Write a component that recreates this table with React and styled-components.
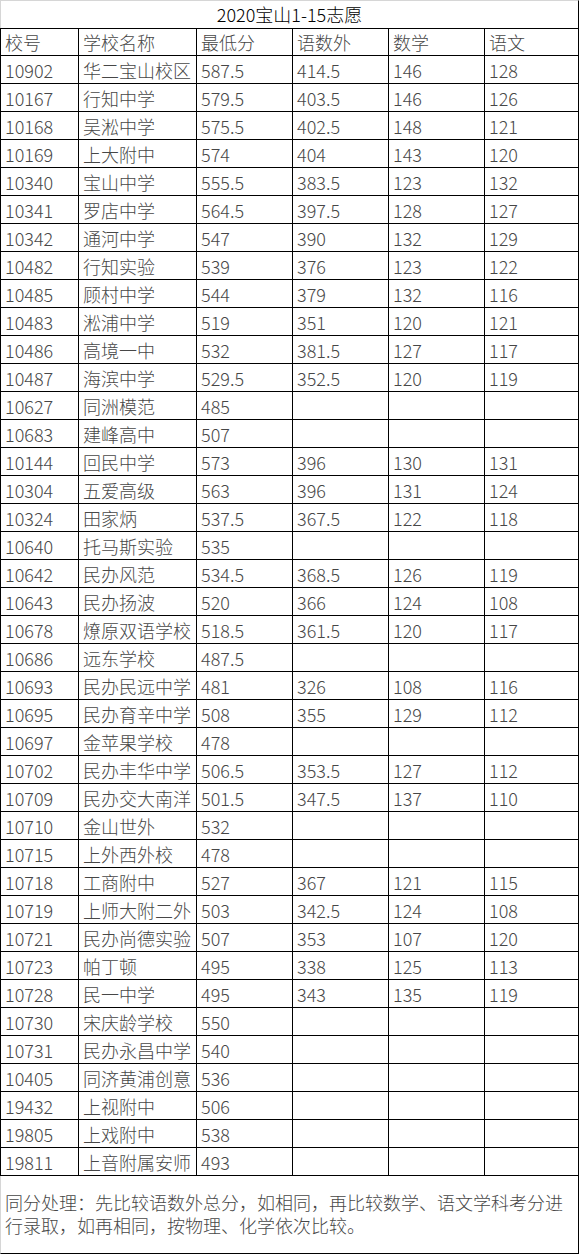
import React from 'react'
import styled, { createGlobalStyle } from 'styled-components'

const rows = [
  ['10902', '华二宝山校区', '587.5', '414.5', '146', '128'],
  ['10167', '行知中学', '579.5', '403.5', '146', '126'],
  ['10168', '吴淞中学', '575.5', '402.5', '148', '121'],
  ['10169', '上大附中', '574', '404', '143', '120'],
  ['10340', '宝山中学', '555.5', '383.5', '123', '132'],
  ['10341', '罗店中学', '564.5', '397.5', '128', '127'],
  ['10342', '通河中学', '547', '390', '132', '129'],
  ['10482', '行知实验', '539', '376', '123', '122'],
  ['10485', '顾村中学', '544', '379', '132', '116'],
  ['10483', '淞浦中学', '519', '351', '120', '121'],
  ['10486', '高境一中', '532', '381.5', '127', '117'],
  ['10487', '海滨中学', '529.5', '352.5', '120', '119'],
  ['10627', '同洲模范', '485', '', '', ''],
  ['10683', '建峰高中', '507', '', '', ''],
  ['10144', '回民中学', '573', '396', '130', '131'],
  ['10304', '五爱高级', '563', '396', '131', '124'],
  ['10324', '田家炳', '537.5', '367.5', '122', '118'],
  ['10640', '托马斯实验', '535', '', '', ''],
  ['10642', '民办风范', '534.5', '368.5', '126', '119'],
  ['10643', '民办扬波', '520', '366', '124', '108'],
  ['10678', '燎原双语学校', '518.5', '361.5', '120', '117'],
  ['10686', '远东学校', '487.5', '', '', ''],
  ['10693', '民办民远中学', '481', '326', '108', '116'],
  ['10695', '民办育辛中学', '508', '355', '129', '112'],
  ['10697', '金苹果学校', '478', '', '', ''],
  ['10702', '民办丰华中学', '506.5', '353.5', '127', '112'],
  ['10709', '民办交大南洋', '501.5', '347.5', '137', '110'],
  ['10710', '金山世外', '532', '', '', ''],
  ['10715', '上外西外校', '478', '', '', ''],
  ['10718', '工商附中', '527', '367', '121', '115'],
  ['10719', '上师大附二外', '503', '342.5', '124', '108'],
  ['10721', '民办尚德实验', '507', '353', '107', '120'],
  ['10723', '帕丁顿', '495', '338', '125', '113'],
  ['10728', '民一中学', '495', '343', '135', '119'],
  ['10730', '宋庆龄学校', '550', '', '', ''],
  ['10731', '民办永昌中学', '540', '', '', ''],
  ['10405', '同济黄浦创意', '536', '', '', ''],
  ['19432', '上视附中', '506', '', '', ''],
  ['19805', '上戏附中', '538', '', '', ''],
  ['19811', '上音附属安师', '493', '', '', ''],
]

const headers = ['校号', '学校名称', '最低分', '语数外', '数学', '语文']

function App() {
  return (
    <>
      <GlobalStyle />
      <Sheet>
        <Title>2020宝山1-15志愿</Title>
        {headers.map((h, i) => (
          <Cell key={'h' + i} $first={i === 0}>{h}</Cell>
        ))}
        {rows.map((row, r) =>
          row.map((v, c) => (
            <Cell key={r + '-' + c} $first={c === 0}>{v}</Cell>
          ))
        )}
        <Note>
          同分处理：先比较语数外总分，如相同，再比较数学、语文学科考分进行录取，如再相同，按物理、化学依次比较。
        </Note>
      </Sheet>
    </>
  )
}

export default App

const GlobalStyle = createGlobalStyle`
  body {
    margin: 0;
    background: #fff;
  }
`

const Sheet = styled.div`
  display: grid;
  grid-template-columns: 79px 118px 96px 96px 96px 94px;
  grid-auto-rows: 28px;
  width: 579px;
  font-family: "Noto Sans CJK SC", "Noto Sans", sans-serif;
  font-size: 18px;
  font-weight: 300;
  color: #474747;
`

const Title = styled.div`
  grid-column: 1 / -1;
  box-sizing: border-box;
  height: 29px;
  border-top: 1px solid #d6d6d6;
  border-left: 1px solid #d6d6d6;
  border-right: 1px solid #000;
  border-bottom: 1px solid #000;
  text-align: center;
  line-height: 27px;
  color: #000;
`

const Cell = styled.div`
  box-sizing: border-box;
  border-right: 1px solid #000;
  border-bottom: 1px solid #000;
  border-left: ${p => (p.$first ? '1px solid #000' : 'none')};
  padding: 1px 0 0 4px;
  line-height: 27px;
  white-space: nowrap;
  overflow: hidden;
`

const Note = styled.div`
  grid-column: 1 / -1;
  grid-row: span 3;
  box-sizing: border-box;
  height: 78px;
  border-left: 1px solid #d6d6d6;
  border-right: 1px solid #000;
  border-bottom: 1px solid #000;
  padding: 15px 4px 0 4px;
  line-height: 23px;
`
